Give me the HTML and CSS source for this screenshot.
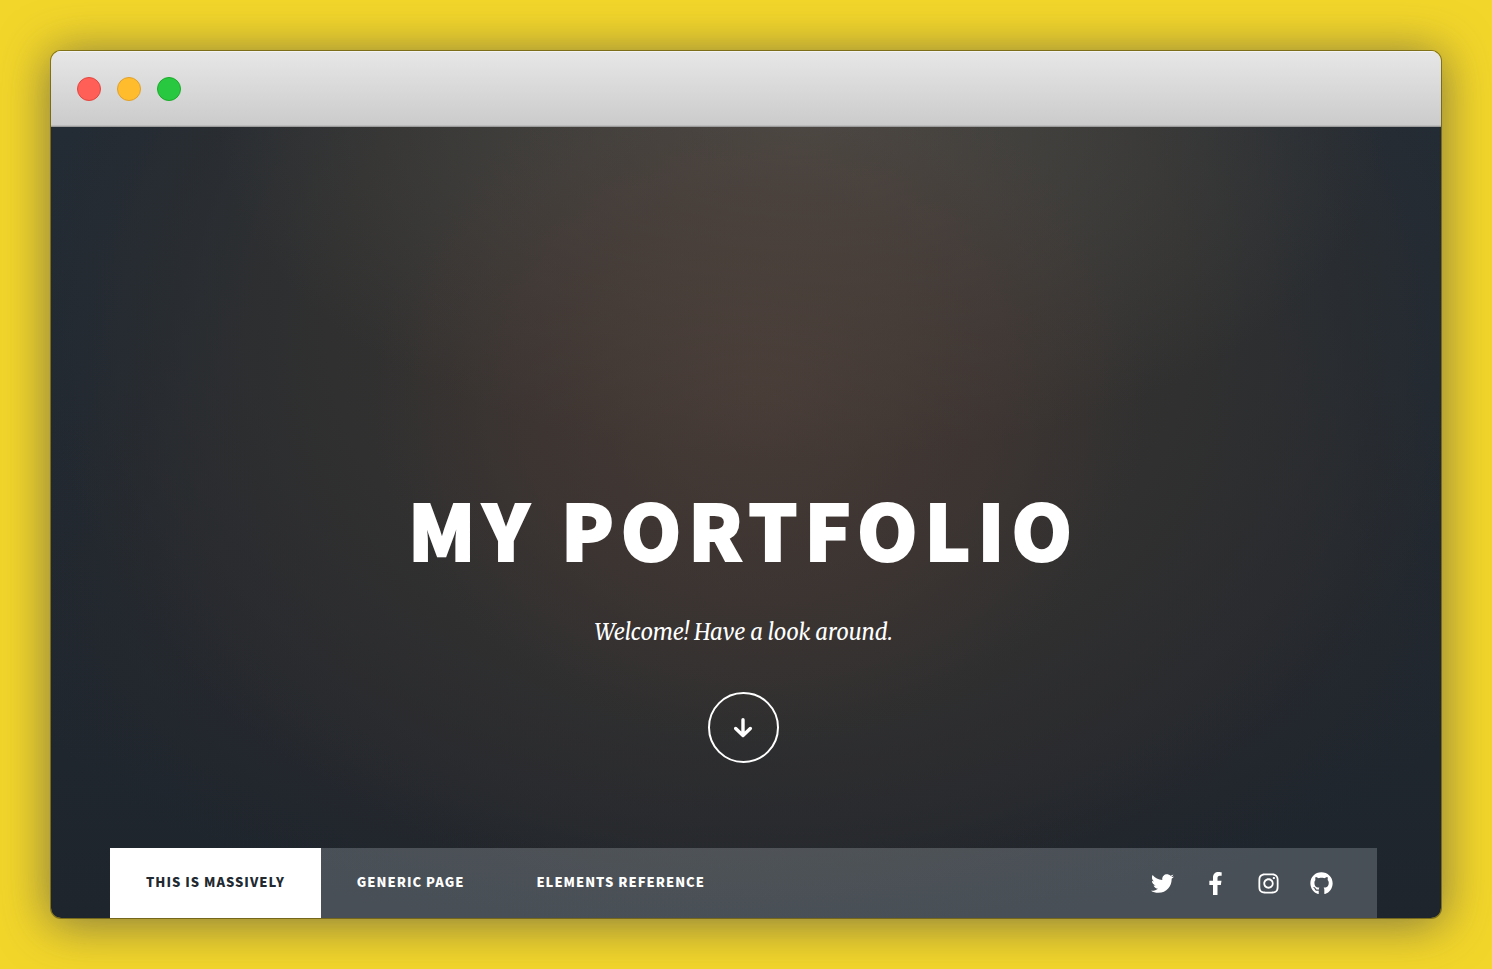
FILE: index.html
```html
<!DOCTYPE html>
<html lang="en">
<head>
<meta charset="utf-8">
<meta name="viewport" content="width=device-width, initial-scale=1">
<title>My Portfolio</title>
<link rel="stylesheet" href="styles.css">
</head>
<body>
<div class="window">
  <div class="titlebar">
    <button class="light light-close" type="button" aria-label="Close"></button>
    <button class="light light-minimize" type="button" aria-label="Minimize"></button>
    <button class="light light-zoom" type="button" aria-label="Zoom"></button>
  </div>
  <main class="page">
    <header class="intro">
      <h1 class="title">My Portfolio</h1>
      <p class="tagline">Welcome! Have a look around.</p>
      <a class="continue" href="#nav" aria-label="Continue">
        <svg class="arrow" viewBox="0 0 20 20" aria-hidden="true"><path d="M9 1.700V17.500M1.700 10.500 9 17.500l7.300-7"/></svg>
      </a>
    </header>
    <nav class="nav" id="nav">
      <ul class="links">
        <li><a class="link active" href="#">This is Massively</a></li>
        <li><a class="link" href="#">Generic Page</a></li>
        <li><a class="link" href="#">Elements Reference</a></li>
      </ul>
      <ul class="icons">
        <li><a class="icon" href="#" aria-label="Twitter"><svg viewBox="0 0 512 512"><path d="M459.370 151.716c.325 4.548.325 9.097.325 13.645 0 138.720-105.583 298.558-298.558 298.558-59.452 0-114.680-17.219-161.137-47.106 8.447.974 16.568 1.299 25.340 1.299 49.055 0 94.213-16.568 130.274-44.832-46.132-.975-84.792-31.188-98.112-72.772 6.498.974 12.995 1.624 19.818 1.624 9.421 0 18.843-1.300 27.614-3.573-48.081-9.747-84.143-51.980-84.143-102.985v-1.299c13.969 7.797 30.214 12.670 47.431 13.319-28.264-18.843-46.781-51.005-46.781-87.391 0-19.492 5.197-37.360 14.294-52.954 51.655 63.675 129.300 105.258 216.365 109.807-1.624-7.797-2.599-15.918-2.599-24.040 0-57.828 46.782-104.934 104.934-104.934 30.213 0 57.502 12.670 76.670 33.137 23.715-4.548 46.456-13.320 66.599-25.340-7.798 24.366-24.366 44.833-46.132 57.827 21.117-2.273 41.584-8.122 60.426-16.243-14.292 20.791-32.161 39.308-52.628 54.253z"/></svg></a></li>
        <li><a class="icon" href="#" aria-label="Facebook"><svg viewBox="-96 0 512 512"><path d="M279.140 288l14.220-92.660h-88.910v-60.130c0-25.350 12.420-50.060 52.240-50.060h40.420V6.260S260.430 0 225.360 0c-73.220 0-121.080 44.380-121.080 124.720v70.620H22.890V288h81.390v224h100.170V288z"/></svg></a></li>
        <li><a class="icon" href="#" aria-label="Instagram"><svg viewBox="-32 0 512 512"><path d="M224.100 141c-63.600 0-114.900 51.300-114.900 114.900s51.300 114.900 114.900 114.900S339 319.500 339 255.900 287.700 141 224.100 141zm0 189.600c-41.100 0-74.700-33.500-74.700-74.700s33.500-74.700 74.700-74.700 74.700 33.500 74.700 74.700-33.600 74.700-74.700 74.700zm146.400-194.300c0 14.900-12 26.800-26.800 26.800-14.900 0-26.800-12-26.800-26.800s12-26.800 26.800-26.800 26.800 12 26.800 26.800zm76.100 27.200c-1.700-35.900-9.900-67.700-36.200-93.900-26.200-26.200-58-34.400-93.900-36.200-37-2.100-147.900-2.100-184.900 0-35.800 1.700-67.600 9.900-93.900 36.100s-34.400 58-36.200 93.900c-2.100 37-2.100 147.900 0 184.900 1.700 35.900 9.900 67.700 36.200 93.900s58 34.400 93.900 36.200c37 2.100 147.900 2.100 184.900 0 35.900-1.700 67.700-9.900 93.900-36.200 26.200-26.200 34.400-58 36.200-93.900 2.100-37 2.100-147.800 0-184.800zM398.800 388c-7.800 19.600-22.900 34.700-42.600 42.600-29.500 11.700-99.500 9-132.100 9s-102.700 2.600-132.100-9c-19.600-7.800-34.700-22.900-42.600-42.600-11.700-29.500-9-99.500-9-132.100s-2.600-102.700 9-132.100c7.800-19.600 22.900-34.700 42.600-42.600 29.500-11.700 99.500-9 132.100-9s102.700-2.600 132.100 9c19.600 7.800 34.700 22.900 42.600 42.600 11.700 29.500 9 99.500 9 132.100s2.700 102.700-9 132.100z"/></svg></a></li>
        <li><a class="icon" href="#" aria-label="GitHub"><svg viewBox="-8 0 512 512"><path d="M165.900 397.400c0 2-2.300 3.600-5.200 3.600-3.300.3-5.600-1.300-5.600-3.600 0-2 2.300-3.600 5.200-3.600 3-.3 5.600 1.300 5.600 3.600zm-31.100-4.500c-.7 2 1.300 4.300 4.300 4.900 2.600 1 5.600 0 6.200-2s-1.300-4.300-4.300-5.200c-2.600-.7-5.500.3-6.200 2.300zm44.200-1.700c-2.900.7-4.900 2.600-4.600 4.900.3 2 2.900 3.300 5.900 2.600 2.900-.7 4.900-2.600 4.600-4.600-.3-1.900-3-3.200-5.900-2.900zM244.800 8C106.100 8 0 113.300 0 252c0 110.900 69.800 205.800 169.500 239.200 12.800 2.300 17.300-5.600 17.300-12.100 0-6.200-.3-40.400-.3-61.400 0 0-70 15-84.700-29.800 0 0-11.400-29.100-27.800-36.600 0 0-22.900-15.700 1.600-15.400 0 0 24.900 2 38.600 25.800 21.900 38.600 58.600 27.500 72.900 20.900 2.300-16 8.800-27.100 16-33.700-55.900-6.200-112.300-14.300-112.300-110.500 0-27.500 7.600-41.300 23.600-58.900-2.600-6.500-11.100-33.300 2.600-67.900 20.900-6.500 69 27 69 27 20-5.600 41.500-8.500 62.800-8.500s42.800 2.900 62.800 8.500c0 0 48.100-33.600 69-27 13.700 34.700 5.200 61.400 2.600 67.900 16 17.700 25.800 31.500 25.800 58.900 0 96.500-58.900 104.200-114.800 110.500 9.200 7.900 17 22.900 17 46.400 0 33.700-.3 75.400-.3 83.600 0 6.500 4.600 14.400 17.300 12.100C428.200 457.800 496 362.900 496 252 496 113.300 383.500 8 244.800 8z"/></svg></a></li>
      </ul>
    </nav>
  </main>
</div>
</body>
</html>
```
FILE: styles.css
```css
* {
  box-sizing: border-box;
}

body {
  display: flex;
  min-height: 100vh;
  margin: 0;
  padding: 51px;
  background: #f3d62a;
  font-family: "Noto Sans CJK JP", "Source Sans Pro", sans-serif;
}

.window {
  display: flex;
  flex: 1;
  flex-direction: column;
  overflow: hidden;
  border-radius: 10px;
  box-shadow: 0 0 0 1px rgba(60, 50, 0, 0.5), 0 4px 48px 3px rgba(75, 75, 75, 0.66);
}

.titlebar {
  display: flex;
  align-items: center;
  gap: 16px;
  height: 76px;
  padding: 1px 26px 0;
  border-bottom: 1px solid #9c9c9c;
  background: linear-gradient(#e7e7e7, #cbcbcb);
  box-shadow: inset 0 1px 0 #f4f4f4, inset 0 -1px 0 #bcbcbc;
}

.light {
  width: 24px;
  height: 24px;
  padding: 0;
  border: 1px solid;
  border-radius: 50%;
}

.light-close {
  border-color: #e2463f;
  background: #ff5f57;
}

.light-minimize {
  border-color: #e0a02c;
  background: #ffbd2e;
}

.light-zoom {
  border-color: #1aab29;
  background: #28c940;
}

.page {
  display: flex;
  flex: 1;
  flex-direction: column;
  padding: 0 64px 0 59px;
  background:
    radial-gradient(ellipse 28% 44% at 51% 34%, rgba(86, 66, 58, 0.5), rgba(78, 58, 52, 0.34) 60%, transparent),
    radial-gradient(ellipse 42% 42% at 54% 0%, rgba(86, 84, 78, 0.7), transparent),
    radial-gradient(ellipse 52% 74% at 51% 24%, #393532, #303030 60%, rgba(36, 42, 46, 0) 100%),
    radial-gradient(ellipse 56% 48% at 50% 56%, rgba(46, 43, 45, 0.9), rgba(44, 42, 45, 0.6) 60%, transparent),
    linear-gradient(#232b34, #1e252c);
}

.intro {
  display: flex;
  flex: 1;
  flex-direction: column;
  align-items: center;
  justify-content: flex-end;
  padding-bottom: 85px;
  color: #fff;
}

.title {
  margin: 0 0 44px;
  font-size: 77px;
  font-weight: 900;
  line-height: 88px;
  letter-spacing: 7px;
  text-transform: uppercase;
  -webkit-text-stroke: 2px #fff;
}

.tagline {
  margin: 0 0 44px;
  font-family: "Merriweather", "DejaVu Serif Condensed", "DejaVu Serif", serif;
  font-size: 22px;
  font-style: italic;
  line-height: 32px;
}

.continue {
  display: flex;
  align-items: center;
  justify-content: center;
  width: 71px;
  height: 71px;
  border: 2px solid #fff;
  border-radius: 50%;
}

.arrow {
  width: 20px;
  height: 20px;
  fill: none;
  stroke: #fff;
  stroke-width: 3.400;
  stroke-linecap: round;
  stroke-linejoin: round;
}

.nav {
  display: flex;
  justify-content: space-between;
  height: 70px;
  background: rgba(240, 248, 255, 0.2);
}

.links,
.icons {
  display: flex;
  margin: 0;
  padding: 0;
  list-style: none;
}

.link {
  display: block;
  padding: 0 36px;
  color: #fff;
  font-size: 13px;
  font-weight: 900;
  line-height: 68px;
  letter-spacing: 1px;
  text-decoration: none;
  text-transform: uppercase;
}

.link.active {
  height: 70px;
  background: #fff;
  color: #212931;
}

.icons {
  align-items: center;
  gap: 30px;
  padding-right: 44px;
}

.icon {
  display: block;
  width: 23px;
  height: 23px;
}

.icon svg {
  display: block;
  width: 100%;
  height: 100%;
  fill: #fff;
}
```
